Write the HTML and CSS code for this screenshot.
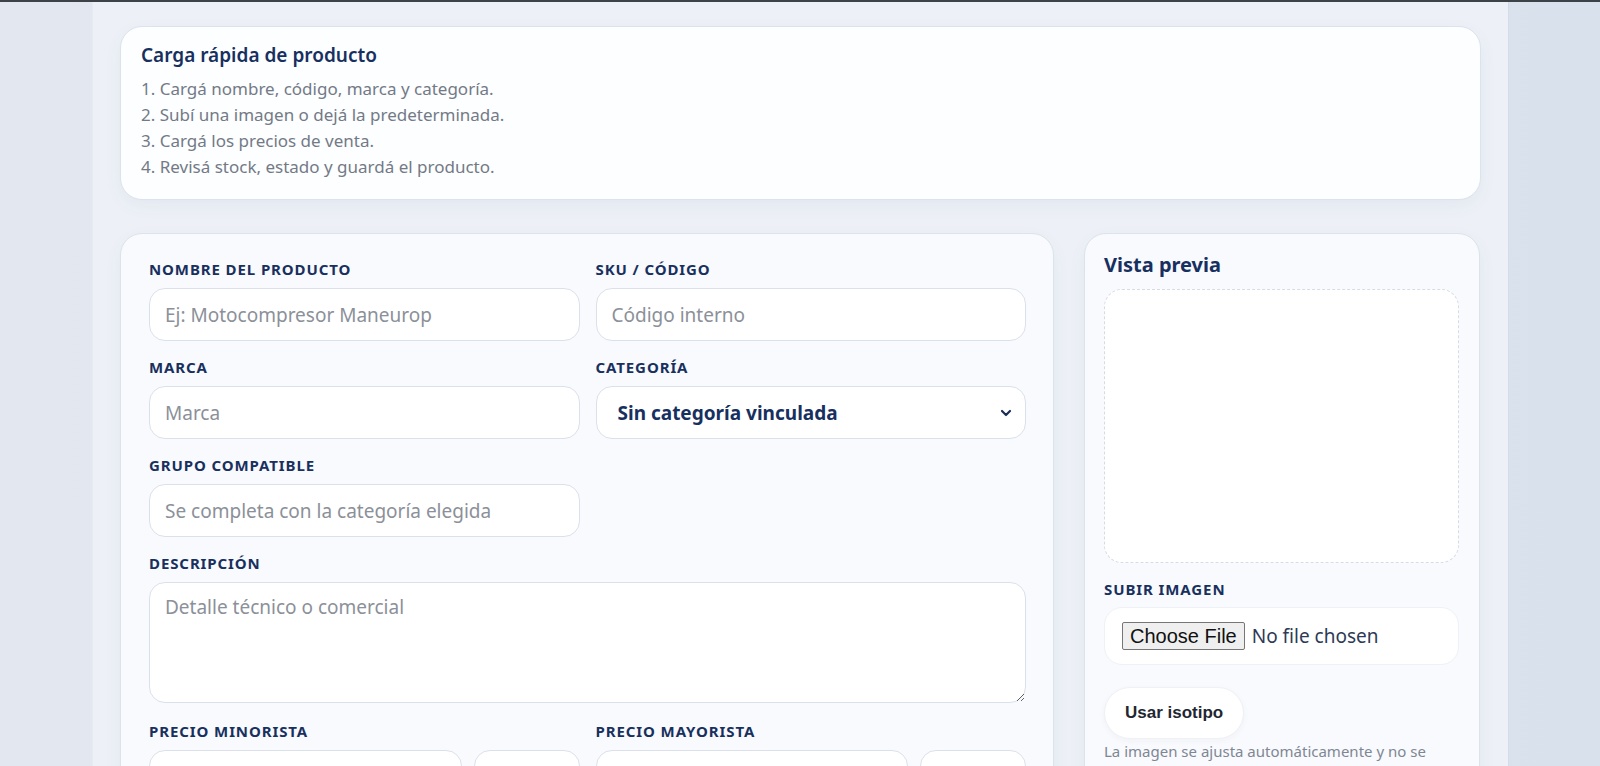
FILE: index.html
```html
<!DOCTYPE html>
<html lang="es">
<head>
<meta charset="utf-8">
<title>Carga de producto</title>
<link rel="stylesheet" href="styles.css">
</head>
<body>
<div class="topbar"></div>
<main class="shell">
  <section class="card intro">
    <h2 class="intro-title">Carga rápida de producto</h2>
    <ol class="steps">
      <li>Cargá nombre, código, marca y categoría.</li>
      <li>Subí una imagen o dejá la predeterminada.</li>
      <li>Cargá los precios de venta.</li>
      <li>Revisá stock, estado y guardá el producto.</li>
    </ol>
  </section>

  <div class="layout">
    <form class="card form-card">
      <div class="fields">
        <div class="field">
          <label class="lbl">Nombre del producto</label>
          <input class="inp" type="text" placeholder="Ej: Motocompresor Maneurop">
        </div>
        <div class="field">
          <label class="lbl">SKU / Código</label>
          <input class="inp" type="text" placeholder="Código interno">
        </div>
        <div class="field">
          <label class="lbl">Marca</label>
          <input class="inp" type="text" placeholder="Marca">
        </div>
        <div class="field">
          <label class="lbl">Categoría</label>
          <div class="select-wrap">
            <select class="inp sel">
              <option>Sin categoría vinculada</option>
            </select>
            <svg class="chev" width="12" height="8" viewBox="0 0 12 8"><path d="M2 2 L6 6 L10 2" fill="none" stroke="#1a2f55" stroke-width="2.2" stroke-linecap="round" stroke-linejoin="round"/></svg>
          </div>
        </div>
        <div class="field">
          <label class="lbl">Grupo compatible</label>
          <input class="inp" type="text" placeholder="Se completa con la categoría elegida">
        </div>
        <div class="field"></div>
        <div class="field wide">
          <label class="lbl">Descripción</label>
          <textarea class="inp area" placeholder="Detalle técnico o comercial"></textarea>
        </div>
        <div class="field price">
          <label class="lbl">Precio minorista</label>
          <div class="price-row">
            <input class="inp" type="text">
            <input class="inp small" type="text">
          </div>
        </div>
        <div class="field price">
          <label class="lbl">Precio mayorista</label>
          <div class="price-row">
            <input class="inp" type="text">
            <input class="inp small" type="text">
          </div>
        </div>
      </div>
    </form>

    <aside class="card preview">
      <h3 class="preview-title">Vista previa</h3>
      <div class="dropbox"></div>
      <label class="lbl">Subir imagen</label>
      <div class="filebox"><input type="file" class="file"></div>
      <button type="button" class="pill">Usar isotipo</button>
      <p class="help">La imagen se ajusta automáticamente y no se deforma al mostrarse en el catálogo.</p>
    </aside>
  </div>
</main>
</body>
</html>
```

FILE: styles.css
```css
* { box-sizing: border-box; }

html, body {
  margin: 0;
  padding: 0;
}

body {
  background: linear-gradient(90deg, #e3e8f0 0%, #dfe5ee 50%, #d9e1ec 100%);
  font-family: "Noto Sans", "Open Sans", sans-serif;
  color: #1b2f57;
  height: 766px;
  overflow: hidden;
}

.topbar {
  height: 2px;
  background: #3d4148;
}

.shell {
  margin-left: 92px;
  width: 1417px;
  min-height: 900px;
  background: #edf1f7;
  border-left: 1px solid #e6ebf2;
  border-right: 1px solid #d3dbe6;
  padding: 24px 27px 0 27px;
  display: flex;
  flex-direction: column;
  gap: 33px;
}

.card {
  background: #f8fafd;
  border: 1px solid #dde3ec;
  border-radius: 22px;
  box-shadow: 0 6px 18px rgba(40, 60, 100, 0.05);
}

.intro {
  background: #fdfeff;
  height: 174px;
  padding: 16px 20px 0 20px;
}

.intro-title {
  margin: 0;
  font-size: 19px;
  line-height: 24px;
  font-weight: 600;
  color: #17305f;
}

.steps {
  margin: 9px 0 0 0;
  padding: 0;
  list-style: none;
  counter-reset: step;
}

.steps li {
  counter-increment: step;
  font-size: 17px;
  line-height: 26px;
  color: #737a86;
}

.steps li::before {
  content: counter(step) ". ";
}

.layout {
  display: grid;
  grid-template-columns: 934px 396px;
  column-gap: 30px;
  align-items: start;
}

.form-card {
  padding: 26px 27px 40px 28px;
  min-height: 620px;
}

.fields {
  display: grid;
  grid-template-columns: 1fr 1fr;
  column-gap: 16px;
  row-gap: 17px;
}

.field.wide { grid-column: 1 / 3; }
.field.price { margin-top: 2px; }

.lbl {
  display: block;
  font-size: 15px;
  line-height: 18px;
  font-weight: 700;
  letter-spacing: 0.06em;
  text-transform: uppercase;
  color: #18305e;
  margin-bottom: 10px;
}

.inp {
  display: block;
  width: 100%;
  height: 53px;
  border: 1px solid #dbe1ea;
  border-radius: 16px;
  background: #ffffff;
  padding: 0 15px;
  font-family: "Noto Sans", "Open Sans", sans-serif;
  font-size: 19px;
  color: #1b2f57;
  outline: none;
}

.inp::placeholder { color: #8b9099; }

.select-wrap { position: relative; }

.sel {
  appearance: none;
  -webkit-appearance: none;
  padding-left: 21px;
  font-weight: 700;
  color: #17305f;
  height: 53px;
}

.chev {
  position: absolute;
  right: 14px;
  top: 23px;
}

.area {
  height: 121px;
  padding: 11px 15px;
  resize: vertical;
}

.price-row {
  display: grid;
  grid-template-columns: 1fr 106px;
  gap: 12px;
}

.preview {
  padding: 18px 20px 30px 19px;
  min-height: 620px;
}

.preview-title {
  margin: 0;
  font-size: 20px;
  line-height: 26px;
  font-weight: 700;
  color: #17305f;
}

.dropbox {
  margin-top: 11px;
  height: 274px;
  border: 1.5px dashed #d6dce5;
  border-radius: 18px;
  background: #ffffff;
  margin-bottom: 17px;
}

.preview .lbl { margin-bottom: 9px; }

.filebox {
  height: 58px;
  background: #ffffff;
  border: 1px solid #eef1f6;
  border-radius: 18px;
  padding: 14px 17px;
}

.file {
  font-family: "Noto Sans", "Open Sans", sans-serif;
  font-size: 19px;
  color: #2d3a55;
}

.file::file-selector-button {
  font-family: "Liberation Sans", Arial, sans-serif;
  font-size: 20px;
  color: #111111;
  background: #efefef;
  border: 1px solid #767676;
  border-radius: 2px;
  padding: 0 7px;
  margin-right: 7px;
  height: 28px;
}

.pill {
  display: block;
  margin-top: 22px;
  height: 52px;
  padding: 0 20px;
  border-radius: 26px;
  border: 1px solid #eef1f6;
  background: #ffffff;
  font-family: "Liberation Sans", Arial, sans-serif;
  font-size: 17px;
  font-weight: 700;
  color: #1f2733;
  box-shadow: 0 2px 6px rgba(40, 60, 100, 0.04);
}

.help {
  margin: 2px 0 0 0;
  font-size: 15px;
  line-height: 20px;
  color: #7f8794;
}
```
